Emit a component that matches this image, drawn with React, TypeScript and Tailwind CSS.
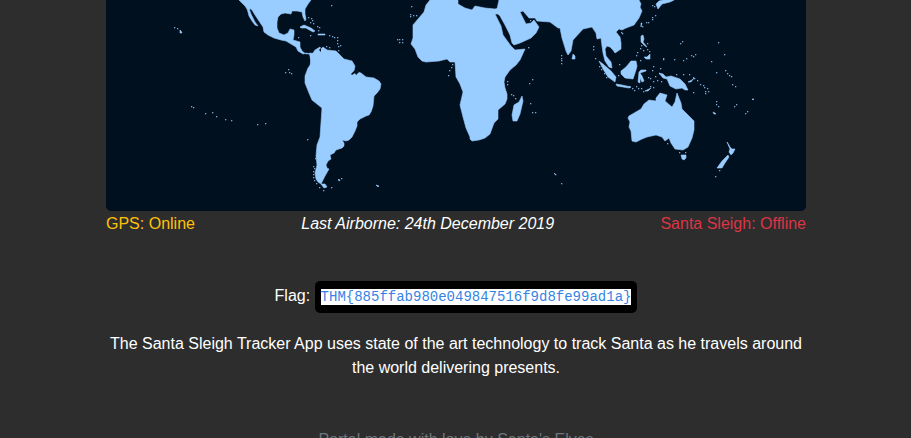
const LAND = [
  // North and Central America
  'M239 0L242 3L245 6L247 9L248 12L249 16L252 21L255 25L258 26L255 22L253 18L251 14L249.5 10L250 8.5L252 10L255 15L259 21L263 27L264 32L268 35L274 38L281 40L286 41L291 44L296 47L298 51L303 54L307 53L310 55L311 60L310 66L314 60L313 54L311 53L306 54L302 51L300 47L300 42L293 40L294 35L294 30L290 29L288 33L284 35L279 33L277 28L277 22L278 17L281 14L285 13L291 14L292 11L297 11L302 12L303 17L305 21L306 19L305 14L305 9L308 4L311 0Z',
  // South America
  'M310 55L313 53L315 50L320 47L321 49L323 47L327 50L336 51L339 54L344 59L352 61L355 66L354 71L361 73L366 77L374 78L379 81L381 84L380 89L377 93L374 96L373 106L371 112L369 115L366 116L360 119L357 122L357 126L355 131L352 137L349 140L346 141L342 140L344 143L344 146L342 148L336 150L334 153L330 155L331 159L328 161L326 165L327 168L329 169L325 176L321 184L318 182L316 179L315 173L317 165L316 156L317 145L320 137L322 108L317 104L312 100L309 93L305 83L305 76L308 68L311 64Z',
  // Africa
  'M430 0L426 5L424 12L418 19L413 25L413 38L411 44L415 49L418 57L422 61L426 62L439 61L447 59L450 62L455 62L456 77L460 84L463 92L460 105L463 117L466 128L470 137L470 139L472 141L479 140L485 138L490 134L494 123L498 119L498 110L505 104L507 99L507 94L505 88L504 82L505 77L510 70L516 65L520 60L525 49L515 50L511 46L503 35L501 26L495 14L499 14L499 8L495 9L485 8L475 6L472 10L465 8L458 4L458 0Z',
  // Arabia, India and the Asian mainland
  'M499 0L497 9L498 14L500 16L505 25L510 35L512 43L514 45L520 43L531 38L536 33L539 27L534 20L531 23L526 24L520 12L523 11L529 18L535 18L537 21L550 22L554 25L558 28L560 28L562 38L566 51L568 55L571 51L573 40L583 29L592 27L596 33L597 39L601 38L602 46L603 53L605 61L609 67L612 68L611 62L606 56L605 49L607 46L610 47L613 50L615 53L621 49L621 43L620 37L616 32L619 29L622 30L626 28L634 25L639 18L642 11L640 7L641 4L639 0Z',
  // Australia
  'M628 118L629 116L641 109L644 104L649 100L656 101L656 98L660 93L667 95L665 101L672 107L675 102L677 93L681 103L682 109L690 117L694 121L694 130L692 138L688 147L683 150L675 149L671 143L669 138L665 141L662 137L656 135L647 137L642 139L636 142L632 141L631 131L629 127L630 122Z',
  // Tasmania and New Zealand
  'M681 155L686 155L686 158L684 160L682 159Z',
  'M727 142L729 145L730 147L732 149L735 149L733 153L731 155L729 152L730 149Z',
  'M728 155L729 157L725 163L722 168L717 168L722 161Z',
  // Madagascar and Sri Lanka
  'M522 96L523 101L520 114L517 121L513 121L512 115L514 105L519 102Z',
  'M573 54L575 56L575 59L572 59Z',
  // Cuba, Hispaniola and Puerto Rico
  'M300 27L304 25L311 28L315 31L313 32L306 28L301 28Z',
  'M318 34L325 34L325 35L318 35Z',
  // Malay islands
  'M599 61L603 64L611 71L616 77L615 82L608 77L603 69Z',
  'M616 84L622 85L631 87L629 88L617 86Z',
  'M621 71L626 67L631 61L636 61L637 66L636 70L633 79L625 78L621 74Z',
  'M639 72L641 70L646 70L646 71L640 73L642 76L644 81L642 82L640 78L640 83L638 82Z',
  // Philippines
  'M641 36L643 35L644 39L643 42L647 47L645 46L641 42Z',
  'M644 57L647 57L650 54L650 59L646 59Z',
  // New Guinea and New Britain
  'M659 73L663 74L666 77L671 76L680 79L685 84L688 90L685 90L682 88L676 89L670 86L667 79L663 78Z',
  'M688 82L692 80L694 78L691 82Z',
  // Timor, Kyushu, Honshu, Taiwan
  'M645 91L651 88L648 91Z',
  'M656 4L659 1L663 0L674 0L670 2L662 4L658 9Z',
  'M641 23L642 23L641 27Z',
  // Tierra del Fuego, Falklands, South Georgia
  'M321 184L325 184L327 187L324 188Z',
  'M338 180L339 179L340 181Z',
  'M376 185L379 186L378 187Z',
  // Hawaii, New Caledonia, Fiji
  'M180 30L181 31L182 33L180 33Z',
  'M713 112L715 113L716 114L714 114Z',
  'M752 99L754 99L753 100Z',
];

const INLETS = [
  'M351 74L355 70L359 72L356 75L355 73L352 75Z',
  'M319 50L321 48L321 52Z',
];

const ISLANDS: [number, number][] = [
  [174, 27], [177, 28], [191, 106], [193, 107], [205, 113], [212, 112], [216, 116], [225, 119], [231, 120], [257, 124], [265, 123],
  [285, 72], [288, 69], [289, 72], [291, 73], [308, 17], [311, 18], [310, 22], [312, 20], [313, 23], [317, 26], [319, 27], [318, 30], [331, 5],
  [298, 37], [310, 35], [329, 35], [332, 36], [334, 37], [337, 37], [337, 40], [337, 43], [338, 46], [340, 45], [326, 46], [329, 47],
  [338, 50], [397, 39], [399, 42], [399, 39], [402, 39], [402, 42], [411, 6], [410, 14], [410, 16], [413, 15], [416, 15],
  [307, 139], [315, 158], [313, 166], [314, 168], [313, 171], [313, 174], [313, 177], [314, 180], [316, 183], [319, 187], [323, 190], [331, 187], [341, 178],
  [452, 64], [451, 67], [449, 70], [448, 75], [528, 47], [529, 83], [532, 79], [511, 94], [513, 95], [515, 98], [507, 81], [507, 84], [530, 103], [532, 112], [535, 112],
  [530, 20], [561, 55], [561, 58], [561, 60], [561, 63], [593, 46], [593, 49], [595, 58], [554, 173], [555, 174], [561, 183],
  [599, 66], [601, 69], [604, 73], [606, 77], [619, 64], [618, 75], [621, 32], [622, 33], [629, 86], [632, 88], [634, 90], [636, 86], [638, 88], [641, 88], [643, 91],
  [637, 52], [640, 48], [643, 50], [647, 43], [647, 49], [636, 55], [640, 60], [649, 51], [641, 45], [646, 22], [648, 22], [652, 19], [652, 17], [655, 15],
  [642, 26], [652, 5], [654, 6], [648, 77], [650, 78], [652, 70], [653, 66], [655, 76], [653, 81], [657, 80], [659, 73], [661, 81], [650, 86], [653, 87], [660, 68],
  [663, 58], [663, 59], [674, 59], [680, 43], [682, 41], [691, 55], [693, 56], [695, 54], [683, 60], [686, 58], [711, 61], [718, 42], [724, 54],
  [683, 74], [676, 74], [689, 74], [693, 77], [694, 78], [697, 80], [700, 84], [703, 85], [704, 87], [707, 88], [705, 91], [708, 91], [693, 92], [705, 93],
  [716, 72], [725, 70], [727, 73], [729, 75], [731, 76], [732, 84], [735, 86], [716, 101], [716, 104], [718, 106], [734, 106], [736, 104], [745, 113], [747, 111],
  [679, 152], [685, 152], [719, 170], [715, 176], [667, 143],
];

function WorldMap() {
  return (
    <svg viewBox="106 0 700 211" role="img" aria-label="World map" className="block w-full rounded-b-[5px] bg-[#00101f]">
      <g fill="#99ccff" stroke="#99ccff" strokeWidth="0.6" strokeLinejoin="round">
        {LAND.map((d) => (
          <path key={d} d={d} />
        ))}
      </g>
      <g fill="#00101f">
        {INLETS.map((d) => (
          <path key={d} d={d} />
        ))}
      </g>
      <g fill="#99ccff">
        {ISLANDS.map(([x, y]) => (
          <rect key={`${x}-${y}`} x={x} y={y} width="1.3" height="1.3" opacity="0.8" />
        ))}
      </g>
    </svg>
  );
}

export default function App() {
  return (
    <div className="h-screen overflow-hidden bg-[#2d2d2d] pl-px font-['Liberation_Sans',Arial,sans-serif] text-base text-white">
      <main className="mx-auto max-w-[700px]">
        <WorldMap />
        <div className="mt-px flex justify-between">
          <span className="text-[#ffc107]">GPS: Online</span>
          <em>Last Airborne: 24th December 2019</em>
          <span className="text-[#dc3545]">Santa Sleigh: Offline</span>
        </div>
        <p className="mt-12 text-center">
          Flag:{' '}
          <code className="rounded-[5px] bg-black px-1.5 py-2 font-['Liberation_Mono','Courier_New',monospace] text-sm text-[#3584e4]">
            <span className="bg-white">{'THM{885ffab980e049847516f9d8fe99ad1a}'}</span>
          </code>
        </p>
        <p className="mt-6 text-center">
          The Santa Sleigh Tracker App uses state of the art technology to track Santa as he travels around the world
          delivering presents.
        </p>
      </main>
      <footer className="mt-12 text-center text-[#6c757d]">Portal made with love by Santa's Elves</footer>
    </div>
  );
}
